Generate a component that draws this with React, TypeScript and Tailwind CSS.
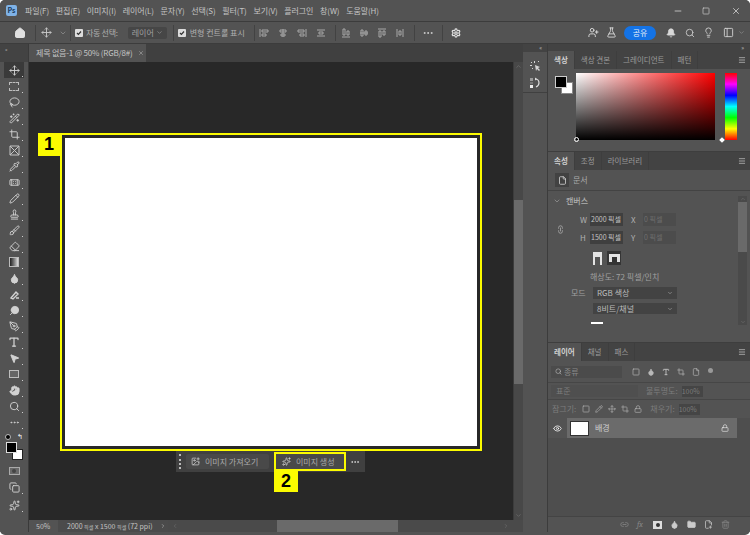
import {
  Bell,
  Brush,
  ChevronDown,
  ChevronLeft,
  ChevronRight,
  ChevronUp,
  Crop,
  Droplet,
  Ellipsis,
  Eraser,
  Eye,
  FlaskConical,
  Folder,
  Hand,
  Home,
  Lasso,
  Lightbulb,
  Lock,
  Menu,
  Minus,
  Move,
  PanelLeft,
  PenTool,
  Pencil,
  Pipette,
  Search,
  Settings,
  Square,
  Stamp,
  Trash2,
  Type,
  UserPlus,
  WandSparkles,
  X,
  MousePointer2,
  Link2,
  Bandage,
  Sparkles,
  ImagePlus,
  FilePlus2,
  File,
  Copy,
} from "lucide-react";

const MENUS = ["파일(F)", "편집(E)", "이미지(I)", "레이어(L)", "문자(Y)", "선택(S)", "필터(T)", "보기(V)", "플러그인", "창(W)", "도움말(H)"];

const FONT = "font-['Noto_Sans_CJK_KR','Noto_Sans',sans-serif]";

function Check() {
  return (
    <span className="w-[8px] h-[8px] rounded-[1px] bg-[#dcdcdc] flex items-center justify-center">
      <svg width="6" height="6" viewBox="0 0 6 6">
        <path d="M1 3l1.4 1.4L5 1.5" stroke="#333" strokeWidth="1.2" fill="none" />
      </svg>
    </span>
  );
}

function Sep() {
  return <span className="block w-px h-[16px] bg-[#424242]" />;
}

function AlignIcon({ vertical, n }: { vertical?: boolean; n: number }) {
  const d = ["M1 1v8M3 2h6v2H3zM3 6h4v2H3z", "M5 1v8M2 2h6v2H2zM3 6h4v2H3z", "M9 1v8M1 2h6v2H1zM3 6h4v2H3z", "M1 2h8M1 8h8M3 4h4v2H3z"][n];
  return (
    <svg width="10" height="10" viewBox="0 0 10 10" className={vertical ? "-rotate-90" : ""}>
      <path d={d} stroke="#a8a8a8" strokeWidth="1" fill="none" />
    </svg>
  );
}

function TitleBar() {
  return (
    <div className="h-[21px] flex items-center bg-[#535353] shrink-0">
      <span className="ml-[6px] w-[11px] h-[11px] rounded-[2px] bg-[#7fb2e6] text-[#173a5e] text-[7px] font-bold flex items-center justify-center">Ps</span>
      <div className="ml-[8px] flex gap-[6.7px] text-[8px] tracking-[-0.1px] text-[#c4c4c4]">
        {MENUS.map((m) => (
          <span key={m}>{m}</span>
        ))}
      </div>
      <div className="ml-auto flex items-center text-[#d0d0d0]">
        <Minus size={10} className="mr-[19px]" />
        <Square size={8} className="mr-[21px]" />
        <X size={10} className="mr-[9px]" />
      </div>
    </div>
  );
}

function OptionsBar() {
  return (
    <div className="h-[22px] flex items-center bg-[#535353] border-t border-[#3c3c3c] text-[8px] text-[#b0b0b0] shrink-0">
      <Home size={12} className="ml-[14px] text-[#e0e0e0] fill-[#e0e0e0]" />
      <span className="ml-[9px]"><Sep /></span>
      <Move size={11} className="ml-[5px] text-[#c8c8c8]" />
      <ChevronDown size={8} className="ml-[7px] text-[#999]" />
      <span className="ml-[3px] mr-[4px]"><Sep /></span>
      <Check />
      <span className="ml-[3px] whitespace-nowrap tracking-[-0.3px]">자동 선택:</span>
      <span className="ml-[10px] w-[39px] h-[12px] rounded-[2px] bg-[#464646] flex items-center justify-between px-[4px] text-[#a0a0a0] whitespace-nowrap">
        레이어 <ChevronDown size={7} />
      </span>
      <span className="ml-[6px] mr-[4px]"><Sep /></span>
      <Check />
      <span className="ml-[4px] whitespace-nowrap">변형 컨트롤 표시</span>
      <span className="ml-[9px]"><Sep /></span>
      <div className="ml-[4px] flex gap-[9px]">
        {[0, 1, 2, 3].map((n) => (
          <AlignIcon key={n} n={n} />
        ))}
      </div>
      <span className="ml-[9px]"><Sep /></span>
      <div className="ml-[5px] flex gap-[8px]">
        {[0, 1, 2, 3].map((n) => (
          <AlignIcon key={n} n={n} vertical />
        ))}
      </div>
      <span className="ml-[9px]"><Sep /></span>
      <Ellipsis size={12} className="ml-[7px] text-[#d0d0d0]" />
      <span className="ml-[8px]"><Sep /></span>
      <Settings size={10} strokeWidth={3} className="ml-[8px] text-[#e0e0e0]" />
      <div className="ml-auto flex items-center">
        <UserPlus size={11} className="text-[#e0e0e0]" />
        <FlaskConical size={11} className="ml-[7px] text-[#d8d8d8]" />
        <span className="ml-[7px] w-[32px] h-[14px] rounded-full bg-[#1473e6] text-[#e8f0fa] flex items-center justify-center">공유</span>
        <Bell size={10} className="ml-[10px] text-[#d8d8d8] fill-[#d8d8d8]" />
        <Search size={10} className="ml-[9px] text-[#d0d0d0]" />
        <Lightbulb size={11} className="ml-[8px] text-[#d0d0d0]" />
        <PanelLeft size={11} className="ml-[9px] text-[#d0d0d0]" />
        <ChevronDown size={7} className="ml-[4px] mr-[5px] text-[#999]" />
      </div>
    </div>
  );
}

function SwatchTool() {
  return (
    <div className="relative w-[18px] h-[18px] ml-[6px]">
      <span className="absolute left-[6px] top-[7px] w-[11px] h-[11px] bg-white border border-[#222]" />
      <span className="absolute left-0 top-0 w-[11px] h-[11px] bg-black border border-[#ddd]" />
    </div>
  );
}

function Tool({ children, active }: { children: React.ReactNode; active?: boolean }) {
  return (
    <div className={`relative w-[20px] h-[16px] flex items-center justify-center text-[#d2d2d2] ${active ? "bg-[#3a3a3a]" : ""}`}>
      {children}
      <span className="absolute right-[1px] bottom-[1px] w-[1px] h-[1px] bg-[#cfcfcf]" />
    </div>
  );
}

function ToolBar() {
  const s = 11;
  return (
    <div className="w-[29px] shrink-0 border-r border-[#3a3a3a] flex flex-col items-center bg-[#535353]">
      <div className="w-full h-[18px] bg-[#434343] text-[5px] text-[#bbb] pl-[5px] leading-[9px]">»</div>
      <div className="flex flex-col">
        <Tool active><Move size={s} /></Tool>
        <Tool><span className="w-[10px] h-[9px] border border-dashed border-[#bdbdbd]" /></Tool>
        <Tool><Lasso size={s} /></Tool>
        <Tool><WandSparkles size={s} /></Tool>
        <Tool><Crop size={s} /></Tool>
        <Tool>
          <svg width="11" height="11" viewBox="0 0 11 11">
            <path d="M1 1h9v9H1zM1 1l9 9M10 1L1 10" stroke="#c4c4c4" fill="none" />
          </svg>
        </Tool>
        <Tool><Pipette size={s} /></Tool>
        <Tool><Bandage size={s} /></Tool>
        <Tool><Pencil size={s} /></Tool>
        <Tool><Stamp size={s} /></Tool>
        <Tool><Brush size={s} /></Tool>
        <Tool><Eraser size={s} /></Tool>
        <Tool><span className="w-[10px] h-[10px] bg-gradient-to-r from-[#222] to-[#ddd] border border-[#bbb]" /></Tool>
        <Tool><Droplet size={s} className="fill-[#d2d2d2]" /></Tool>
        <Tool>
          <svg width="11" height="11" viewBox="0 0 11 11">
            <path d="M2 9l5-6 2 2-5 5zM7 9h3" stroke="#d2d2d2" strokeWidth="1.4" fill="none" />
          </svg>
        </Tool>
        <Tool><Search size={s} className="-scale-x-100 fill-[#d2d2d2]" /></Tool>
        <Tool><PenTool size={s} /></Tool>
        <Tool><Type size={12} strokeWidth={2.5} /></Tool>
        <Tool><MousePointer2 size={s} className="fill-[#d2d2d2]" /></Tool>
        <Tool><span className="w-[10px] h-[8px] border border-[#bdbdbd] bg-[#666]" /></Tool>
        <Tool><Hand size={s} className="fill-[#d2d2d2]" /></Tool>
        <Tool><Search size={s} /></Tool>
        <Tool><Ellipsis size={s} /></Tool>
      </div>
      <div className="w-[20px] h-[13px] flex items-center justify-between px-[1px]">
        <span className="w-[6px] h-[6px] rounded-full bg-black border border-[#bbb]" />
        <span className="text-[7px] text-white leading-none">↰</span>
      </div>
      <div className="w-full -ml-[1px] -mt-[1px]"><SwatchTool /></div>
      <div className="mt-[3px] w-[20px] h-[16px] flex items-center justify-center">
        <span className="w-[11px] h-[8px] border border-[#aaa] bg-[#696969] flex items-center justify-center">
          <span className="w-[4px] h-[4px] rounded-full bg-[#444]" />
        </span>
      </div>
      <Tool><Copy size={s} /></Tool>
      <div className="mt-[2px]"><Tool><Sparkles size={s} /></Tool></div>
    </div>
  );
}

function Document() {
  return (
    <div className="flex-1 min-w-0 flex flex-col">
      <div className="h-[18px] bg-[#404040] flex shrink-0">
        <div className="w-[117px] h-full bg-[#535353] flex items-center pl-[7px] text-[8px] tracking-[-0.2px] text-[#c4c4c4] whitespace-nowrap">
          제목 없음-1 @ 50% (RGB/8#)
          <X size={6} className="ml-[5px] text-[#bbb]" />
        </div>
      </div>
      <div className="flex-1 min-h-0 flex">
        <div className="relative flex-1 bg-[#282828] pl-[31px] pt-[71px]">
          <div className="relative w-[422px] h-[318px] border-2 border-[#fbfb00] p-[3px]">
            <div className="w-full h-full bg-white" />
            <span className="absolute -left-[24px] -top-[2px] w-[22px] h-[23px] bg-[#fbfb00] text-black text-[18px] leading-[23px] font-bold text-center font-['Liberation_Sans',sans-serif]">1</span>
          </div>
          {/* 상황별 작업 표시줄 */}
          <div className="absolute left-[147px] top-[389px] w-[189px] h-[21px] bg-[#404040] flex items-center text-[8px] text-[#a9a9a9]">
            <span className="ml-[3px] w-[2px] h-[15px] border-l-2 border-dotted border-[#bbb]" />
            <span className="ml-[5px] w-[83px] h-[15px] rounded-[2px] bg-[#494949] flex items-center pl-[5px]">
              <ImagePlus size={9} className="text-[#cfcfcf] mr-[5px]" />
              이미지 가져오기
            </span>
            <span className="relative ml-[5px] w-[72px] h-[19px] border-2 border-[#fbfb00] bg-[#494949] flex items-center pl-[6px]">
              <Sparkles size={9} className="text-[#cfcfcf] mr-[5px]" />
              이미지 생성
              <span className="absolute -left-[2px] top-[17px] w-[24px] h-[21px] bg-[#fbfb00] text-black text-[18px] leading-[21px] font-bold text-center font-['Liberation_Sans',sans-serif]">2</span>
            </span>
            <Ellipsis size={10} className="ml-[4px] text-[#dcdcdc]" />
          </div>
        </div>
        <div className="w-[10px] bg-[#484848] border-l border-[#3c3c3c] flex flex-col items-center justify-between py-[1px] text-[#777]">
          <ChevronUp size={7} />
          <div className="w-full h-[184px] mt-[130px] mb-auto bg-[#6a6a6a]" />
          <ChevronDown size={7} />
        </div>
      </div>
      <div className="h-[12px] flex items-center bg-[#535353] text-[7px] text-[#c4c4c4] shrink-0">
        <span className="w-[29px] pl-[7px]">50%</span>
        <span className="w-[110px] h-full bg-[#4b4b4b] pl-[9px] flex items-center justify-between pr-[2px] whitespace-nowrap">
          <span>
            2000 <span className="text-[5px]">픽셀</span> x 1500 <span className="text-[5px]">픽셀</span> (72 ppi)
          </span>
          <ChevronRight size={6} />
        </span>
        <div className="flex-1 h-full bg-[#4a4a4a] flex items-center text-[#777] relative">
          <ChevronLeft size={6} className="ml-[4px]" />
          <span className="absolute left-[109px] w-[121px] h-full bg-[#6a6a6a]" />
          <ChevronRight size={6} className="absolute right-[14px]" />
        </div>
      </div>
    </div>
  );
}

function Tabs({ items }: { items: string[] }) {
  return (
    <div className="h-[18px] bg-[#434343] flex shrink-0 text-[7.5px] text-[#9c9c9c]">
      {items.map((t, i) => (
        <span key={t} className={`px-[6px] flex items-center border-r border-[#3e3e3e] ${i === 0 ? "bg-[#535353] font-bold text-[#d0d0d0]" : ""}`}>
          {t}
        </span>
      ))}
      <Menu size={8} className="ml-auto mr-[4px] self-center text-[#cfcfcf]" />
    </div>
  );
}

function ColorPanel() {
  return (
    <div className="h-[100px] shrink-0 flex flex-col">
      <Tabs items={["색상", "색상 견본", "그레이디언트", "패턴"]} />
      <div className="flex-1 flex pt-[4px] pl-[7px]">
        <div className="relative w-[19px] h-[19px] mt-[3px]">
          <span className="absolute left-[6px] top-[6px] w-[12px] h-[12px] bg-white border border-[#888]" />
          <span className="absolute left-0 top-0 w-[12px] h-[12px] bg-black border border-[#ccc]" />
        </div>
        <div className="relative ml-[2px] w-[139px] h-[67px] bg-[linear-gradient(to_top,#000,transparent),linear-gradient(to_right,#fff,#f00)]">
          <span className="absolute -left-[2px] -bottom-[2px] w-[5px] h-[5px] rounded-full border border-white" />
        </div>
        <div className="relative ml-[10px] w-[12px] h-[67px] bg-[linear-gradient(to_bottom,#f00,#f0f,#00f,#0ff,#0f0,#ff0,#f00)]">
          <span className="absolute -left-[5px] -bottom-[2px] w-[4px] h-[4px] bg-white rotate-45" />
        </div>
      </div>
    </div>
  );
}

function Field({ value, dim }: { value: string; dim?: boolean }) {
  return (
    <span className={`w-[33px] h-[13px] flex items-center pl-[1px] text-[7px] whitespace-nowrap ${dim ? "bg-[#4c4c4c] text-[#6f6f6f]" : "bg-[#3f3f3f] text-[#c4c4c4]"}`}>{value}</span>
  );
}

function PropertiesPanel() {
  return (
    <div className="h-[191px] shrink-0 flex flex-col border-t border-[#3e3e3e]">
      <Tabs items={["속성", "조정", "라이브러리"]} />
      <div className="h-[21px] flex items-center border-b border-[#434343] pl-[7px] text-[8px] text-[#aaa] shrink-0">
        <span className="w-[14px] h-[14px] bg-[#424242] flex items-center justify-center">
          <File size={9} className="text-[#ddd]" />
        </span>
        <span className="ml-[4px]">문서</span>
      </div>
      <div className="flex-1 flex min-h-0 text-[8px] text-[#b0b0b0]">
        <div className="flex-1 min-w-0 pl-[5px] pt-[3px]">
          <div className="flex items-center h-[14px]">
            <ChevronDown size={8} className="text-[#a0a0a0]" />
            <span className="ml-[5px] font-medium">캔버스</span>
          </div>
          <div className="flex mt-[5px]">
            <Link2 size={9} className="rotate-90 mt-[12px] ml-[3px] mr-[15px]" />
            <div className="flex flex-col gap-[5px]">
              <div className="flex items-center">
                <span className="w-[10px]">W</span>
                <Field value="2000 픽셀" />
                <span className="ml-[8px] w-[12px]">X</span>
                <Field value="0 픽셀" dim />
              </div>
              <div className="flex items-center">
                <span className="w-[10px]">H</span>
                <Field value="1500 픽셀" />
                <span className="ml-[8px] w-[12px]">Y</span>
                <Field value="0 픽셀" dim />
              </div>
            </div>
          </div>
          <div className="flex items-center ml-[40px] mt-[7px] gap-[5px]">
            <span className="w-[9px] h-[13px] bg-[#e4e4e4] flex items-end justify-center"><span className="w-[5px] h-[8px] bg-[#555]" /></span>
            <span className="w-[14px] h-[14px] bg-[#353535] flex items-center justify-center">
              <span className="w-[11px] h-[8px] bg-[#e4e4e4] flex items-end justify-center"><span className="w-[5px] h-[5px] bg-[#333]" /></span>
            </span>
          </div>
          <div className="ml-[37px] mt-[6px] text-[#a0a0a0]">해상도: 72 픽셀/인치</div>
          <div className="flex items-center mt-[4px]">
            <span className="ml-[18px] w-[22px] text-[#a0a0a0]">모드</span>
            <span className="w-[84px] h-[12px] bg-[#434343] flex items-center justify-between px-[4px] text-[#bbb]">RGB 색상 <ChevronDown size={6} /></span>
          </div>
          <div className="ml-[40px] mt-[4px] w-[84px] h-[11px] bg-[#434343] flex items-center justify-between px-[4px] text-[#bbb]">8비트/채널 <ChevronDown size={6} /></div>
          <div className="ml-[38px] mt-[8px] w-[12px] h-[2px] bg-white" />
        </div>
        <div className="w-[9px] mr-[3px] h-[129px] mt-[5px] bg-[#4a4a4a] flex flex-col items-center text-[#777]">
          <ChevronUp size={6} />
          <span className="w-full h-[50px] bg-[#6a6a6a]" />
          <ChevronDown size={6} className="mt-auto" />
        </div>
      </div>
    </div>
  );
}

function LayersPanel() {
  return (
    <div className="flex-1 min-h-0 flex flex-col border-t border-[#3e3e3e] text-[8px] text-[#7c7c7c]">
      <Tabs items={["레이어", "채널", "패스"]} />
      <div className="h-[22px] flex items-center border-b border-[#464646] pl-[3px] shrink-0">
        <span className="w-[71px] h-[12px] bg-[#4b4b4b] flex items-center pl-[4px] text-[#8a8a8a]">
          <Search size={7} className="mr-[2px] text-[#bbb]" />
          종류
        </span>
        <div className="ml-[10px] flex gap-[7px] text-[#b8b8b8]">
          <Square size={8} />
          <Droplet size={8} className="fill-[#b8b8b8]" />
          <Type size={8} strokeWidth={3} />
          <Crop size={8} />
          <File size={8} />
          <span className="ml-[1px] w-[5px] h-[5px] rounded-full bg-[#999]" />
        </div>
      </div>
      <div className="h-[17px] flex items-center border-b border-[#464646] pl-[3px] shrink-0">
        <span className="w-[87px] h-[12px] bg-[#4f4f4f] pl-[5px] flex items-center">표준</span>
        <span className="ml-[8px]">불투명도:</span>
        <span className="ml-[4px] w-[21px] h-[11px] bg-[#454545] text-[7px] flex items-center">100%</span>
      </div>
      <div className="h-[18px] flex items-center pl-[4px] shrink-0">
        <span>잠그기:</span>
        <div className="ml-[6px] flex gap-[5px] text-[#b0b0b0]">
          <Square size={8} />
          <Pencil size={8} />
          <Move size={8} />
          <Crop size={8} />
          <Lock size={8} />
        </div>
        <span className="ml-[8px]">채우기:</span>
        <span className="ml-[4px] w-[21px] h-[11px] bg-[#454545] text-[7px] flex items-center">100%</span>
      </div>
      <div className="flex-1 min-h-0 bg-[#4e4e4e] pr-[13px]">
        <div className="h-[20px] flex">
          <span className="w-[19px] flex items-center justify-center bg-[#535353]">
            <Eye size={9} className="text-white" />
          </span>
          <span className="flex-1 bg-[#6b6b6b] flex items-center pl-[3px] text-[#cfcfcf]">
            <span className="w-[19px] h-[15px] bg-white border border-[#333]" />
            <span className="ml-[6px]">배경</span>
            <Lock size={8} className="ml-auto mr-[8px] text-[#e4e4e4]" />
          </span>
        </div>
      </div>
      <div className="h-[16px] shrink-0 bg-[#535353] border-t border-[#444] flex items-center justify-end pr-[20px] gap-[8px] text-[#c8c8c8]">
        <Link2 size={9} className="text-[#888]" />
        <span className="italic text-[8px] font-serif text-[#888] w-[8px]">fx</span>
        <span className="w-[9px] h-[8px] bg-[#ddd] flex items-center justify-center"><span className="w-[4px] h-[4px] rounded-full bg-[#333]" /></span>
        <Droplet size={9} className="fill-[#ccc]" />
        <Folder size={9} className="fill-[#ccc]" />
        <FilePlus2 size={9} />
        <Trash2 size={9} className="text-[#888]" />
      </div>
    </div>
  );
}

function Dock() {
  return (
    <div className="w-[25px] shrink-0 border-r border-[#3c3c3c] flex flex-col bg-[#535353]">
      <div className="h-[8px] bg-[#434343] text-[6px] leading-[8px] text-[#bbb] text-right pr-[5px]">«</div>
      <div className="h-[41px] border-b border-[#404040] flex flex-col items-center pt-[8px] gap-[5px] text-[#d4d4d4]">
        <svg width="12" height="12" viewBox="0 0 12 12" fill="#d4d4d4">
          <path d="M6 5l5 2-2 1 2 2-1 1-2-2-1 2zM2 2h1v1H2zM5 1h1v2H5zM9 1h1v1H9zM1 5h2v1H1zM3 8h1v1H3z" />
        </svg>
        <svg width="12" height="12" viewBox="0 0 12 12">
          <path d="M1 1h3v3H1z" fill="#999" />
          <path d="M1 5h3v2H1z" fill="#777" />
          <path d="M1 8h3v3H1z" fill="#eee" />
          <path d="M6 2c3 0 4 2 4 4s-1 3-3 4" stroke="#ddd" strokeWidth="1.2" fill="none" />
          <path d="M6 0.5v3l2-1.5z" fill="#ddd" />
        </svg>
      </div>
    </div>
  );
}

export default function App() {
  return (
    <div className={`w-[750px] h-[535px] overflow-hidden bg-white ${FONT}`}>
      <div className="w-full h-full flex flex-col bg-[#535353] rounded-[5px] pb-[3px] overflow-hidden">
        <TitleBar />
        <OptionsBar />
        <div className="flex-1 min-h-0 flex border-t border-[#3c3c3c]">
          <ToolBar />
          <Document />
          <Dock />
          <div className="w-[202px] shrink-0 flex flex-col">
            <div className="h-[7px] bg-[#434343] text-[6px] leading-[7px] text-[#bbb] text-right pr-[6px] shrink-0">»</div>
            <ColorPanel />
            <PropertiesPanel />
            <LayersPanel />
          </div>
        </div>
      </div>
    </div>
  );
}
